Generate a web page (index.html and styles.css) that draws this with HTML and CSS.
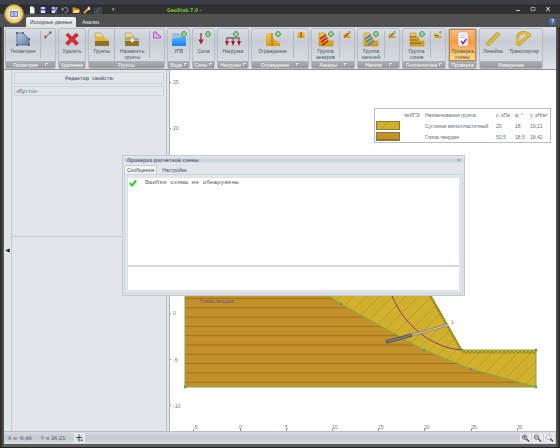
FILE: index.html
```html
<!DOCTYPE html>
<html lang="ru">
<head>
    <meta charset="UTF-8">
    <meta name="viewport" content="width=device-width, initial-scale=1.0">
    <title>GeoStab 7.0</title>
    <link rel="stylesheet" href="styles.css">
</head>
<body>
    <!-- shared icon shapes -->
    <svg class="defs" width="0" height="0">
        <defs>
            <linearGradient id="gold" x1="0" y1="0" x2="0" y2="1">
                <stop offset="0" stop-color="#f0c85a"/><stop offset="1" stop-color="#d69a0c"/>
            </linearGradient>
            <linearGradient id="steel" x1="0" y1="0" x2="1" y2="1">
                <stop offset="0" stop-color="#b9c9de"/><stop offset="1" stop-color="#5f7ea8"/>
            </linearGradient>
            <linearGradient id="water" x1="0" y1="0" x2="0" y2="1">
                <stop offset="0" stop-color="#7cc4fa"/><stop offset="1" stop-color="#1284ee"/>
            </linearGradient>
            <symbol id="plus" viewBox="0 0 6 6">
                <path d="M2 .5h2v1.500h1.500v2h-1.500v1.500h-2v-1.500h-1.500v-2h1.500z" fill="#a8dca0" stroke="#3f9348" stroke-width=".8"/>
            </symbol>
            <symbol id="steps" viewBox="0 0 16 16">
                <path d="M1 2h6v4h3v4h5v5h-14z" fill="url(#gold)" stroke="#b98a20" stroke-width=".6"/>
            </symbol>
            <symbol id="soil" viewBox="0 0 16 16">
                <path d="M1 2h6l3 4h-9z" fill="#e8d9a0" stroke="#a89858" stroke-width=".6"/>
                <path d="M1 6h9l5 4h-14z" fill="#e3b43a"/>
                <path d="M1 10h14v5h-14z" fill="#8b7430"/>
            </symbol>
        </defs>
    </svg>

    <div class="window">
        <header class="titlebar">
            <button class="app-button" aria-label="GeoStab">
                <svg viewBox="0 0 10 8"><rect x=".5" y=".5" width="9" height="7" fill="#7487b8" stroke="#e8edf7"/><path d="M2 3h2.500M2 5h2.500M5.500 3h2.500M5.500 5h2.500" stroke="#fff"/></svg>
            </button>
            <div class="quick">
                <button aria-label="Новый"><svg viewBox="0 0 8 8"><path d="M2 .5h3l1.500 1.500v5.500h-4.500z" fill="#f4f6fa"/><path d="M5 .5v1.500h1.500" fill="none" stroke="#8f98a8" stroke-width=".5"/></svg></button>
                <button aria-label="Сохранить"><svg viewBox="0 0 8 8"><path d="M1 1h6v6h-6z" fill="#4d48c4"/><path d="M2.500 1h3v2h-3zM2 4.500h4v2.500h-4z" fill="#eef"/></svg></button>
                <button aria-label="Сохранить как"><svg viewBox="0 0 8 8"><path d="M1 1h6v6h-6z" fill="#4d48c4"/><path d="M2.500 1h2v2h-2zM2 4.500h3v2.500h-3z" fill="#eef"/><path d="M4 5l3-4 .8.6-3 4z" fill="#eed070"/></svg></button>
                <button aria-label="Отменить"><svg viewBox="0 0 8 8"><path d="M1.500 3q4-3 5 0t-3 4" fill="none" stroke="#7188ad" stroke-width="1.200"/><path d="M.5 1.500v3h3z" fill="#7188ad"/></svg></button>
                <button aria-label="Открыть"><svg viewBox="0 0 8 8"><path d="M.5 1.500h3l.7 1h3v4.500h-6.700z" fill="#c78d21"/><path d="M2 4h6l-1.300 3h-6z" fill="#ffd875"/></svg></button>
                <button aria-label="Настройки"><svg viewBox="0 0 8 8"><path d="M1 7l3.500-3.500" stroke="#f5a42b" stroke-width="1.800"/><path d="M4 3.500l1-2.500 2-.5-.5 1.500 1 .7-1 1.500z" fill="#e5e9ee"/></svg></button>
                <button aria-label="Снимок"><svg viewBox="0 0 8 8" fill="none" stroke="#626873"><path d="M.7 2h6.600v5h-6.600z" stroke-width=".7"/><circle cx="4" cy="4.500" r="1.400" stroke-width=".8"/><path d="M1 7l6-6" stroke-width=".7"/></svg></button>
            </div>
            <button class="quick-more" aria-label="Ещё">▾</button>
            <h1>GeoStab 7.0 -</h1>
            <div class="window-buttons">
                <button aria-label="Свернуть"><svg viewBox="0 0 6 6"><path d="M1 4.500h4" stroke="#c5c8cc"/></svg></button>
                <button aria-label="Развернуть"><svg viewBox="0 0 6 6"><path d="M1 1.500h4v3h-4z" fill="none" stroke="#9b9fa4"/></svg></button>
                <button aria-label="Закрыть"><svg viewBox="0 0 6 6"><path d="M1.200 1l3.600 4M4.800 1l-3.600 4" stroke="#c5c8cc" stroke-width="1.100"/></svg></button>
            </div>
        </header>

        <nav class="tabs">
            <button class="tab active">Исходные данные</button>
            <button class="tab">Анализ</button>
            <button class="help" aria-label="Справка">?</button>
        </nav>

        <div class="ribbon">
            <section class="group geometry">
                <div class="tools">
                    <button class="tool"><svg viewBox="0 0 16 16"><path d="M2 2h6l6 6v6h-12z" fill="url(#steel)" stroke="#4c617f" stroke-width=".8"/><path d="M1 1h2v2h-2zM7 1h2v2h-2zM13 7h2v2h-2zM13 13h2v2h-2zM1 13h2v2h-2z" fill="#536987"/></svg>Геометрия</button>
                    <button class="tool small" aria-label="Отрезок"><svg viewBox="0 0 8 8"><path d="M1.500 6l5-4.500" stroke="#666"/><circle cx="1.500" cy="6" r="1.400" fill="#ce4f42"/><path d="M5.500.5h2v2h-2z" fill="#555"/></svg></button>
                </div>
                <h2>Геометрия <i></i></h2>
            </section>
            <section class="group removal">
                <div class="tools">
                    <button class="tool"><svg viewBox="0 0 16 16"><path d="M2 4l2-2 4 4 4-4 2.500 2.500-4 3.800 4 3.700-2.500 2.500-4-4-4 4-2.500-2.500 4-3.800z" fill="#d12f33" stroke="#a9252b" stroke-width=".5"/></svg>Удалить</button>
                </div>
                <h2>Удаление</h2>
            </section>
            <section class="group soils">
                <div class="tools">
                    <button class="tool"><svg viewBox="0 0 16 16"><use href="#soil"/></svg>Грунты</button>
                    <button class="tool ruled"><svg viewBox="0 0 16 16"><use href="#soil"/><path d="M1 8h14" stroke="#79a8ce" stroke-width="1.500"/><path d="M6 9l2.500-2 2 2.500-2.500 2z" fill="#fff4d2"/></svg>Назначить<br>грунты</button>
                    <button class="tool small" aria-label="Слой"><svg viewBox="0 0 8 8"><path d="M.5 1h3v2h2v2h2v2h-7z" fill="#e2b0e5" stroke="#b84dc0" stroke-width=".9"/></svg></button>
                </div>
                <h2>Грунты</h2>
            </section>
            <section class="group water">
                <div class="tools">
                    <button class="tool"><svg viewBox="0 0 16 16"><path d="M1 2h7l3 4h4v9h-14z" fill="url(#water)"/><path d="M1 2h7l3 4-10 2z" fill="#9fc0d8"/><use href="#plus" x="10" y="0" width="6" height="6"/></svg>УГВ</button>
                </div>
                <h2>Вода <i></i></h2>
            </section>
            <section class="group forces">
                <div class="tools">
                    <button class="tool"><svg viewBox="0 0 16 16"><path d="M5 2v9" stroke="#93565e" stroke-width="1.600"/><path d="M2.500 8.500h5l-2.500 5z" fill="#a71d2d"/><use href="#plus" x="9" y="0" width="6" height="6"/></svg>Сила</button>
                </div>
                <h2>Силы <i></i></h2>
            </section>
            <section class="group loads">
                <div class="tools">
                    <button class="tool"><svg viewBox="0 0 16 16"><path d="M2 13v-6h12v6M8 7v6" fill="none" stroke="#8b6066" stroke-width="1.400"/><path d="M0 10h4l-2 5zM6 10h4l-2 5zM12 10h4l-2 5z" fill="#a71d2d"/><use href="#plus" x="8" y="0" width="6" height="6"/></svg>Нагрузка</button>
                </div>
                <h2>Нагрузки <i></i></h2>
            </section>
            <section class="group fencing">
                <div class="tools">
                    <button class="tool"><svg viewBox="0 0 16 16"><path d="M1 2h6v13h-6zM7 5l3 4 5 3v3h-8z" fill="url(#gold)"/><path d="M7 2v13" stroke="#8d6b20"/><use href="#plus" x="10" y="0" width="6" height="6"/></svg>Ограждение</button>
                    <button class="tool small" aria-label="Ограждение в точке"><svg viewBox="0 0 8 8"><path d="M.5 1h7v6h-7z" fill="url(#gold)"/><path d="M4 1v5" stroke="#a82630" stroke-width="1.200"/></svg></button>
                </div>
                <h2>Ограждение <i></i></h2>
            </section>
            <section class="group anchors">
                <div class="tools">
                    <button class="tool"><svg viewBox="0 0 16 16"><use href="#steps"/><path d="M2 8l6-4M3 11l6-4M4 14l6-4" stroke="#c32227" stroke-width="1.700"/><use href="#plus" x="10" y="0" width="6" height="6"/></svg>Группа<br>анкеров</button>
                    <button class="tool small" aria-label="Анкер"><svg viewBox="0 0 8 8"><path d="M.5 2h3l4 3v2h-7z" fill="url(#gold)"/><path d="M1.500 6l4-4" stroke="#b82b2d" stroke-width="1.300"/><use href="#plus" x="5" y="0" width="3" height="3"/></svg></button>
                </div>
                <h2>Анкеры <i></i></h2>
            </section>
            <section class="group nails">
                <div class="tools">
                    <button class="tool"><svg viewBox="0 0 16 16"><use href="#steps"/><path d="M2 8l6-4M3 11l6-4M5 14l6-4" stroke="#3c87cc" stroke-width="1.700"/><use href="#plus" x="10" y="0" width="6" height="6"/></svg>Группа<br>нагелей</button>
                    <button class="tool small" aria-label="Нагель"><svg viewBox="0 0 8 8"><path d="M.5 2h3l4 3v2h-7z" fill="url(#gold)"/><path d="M1.500 6l4-4" stroke="#50779b" stroke-width="1.300"/><use href="#plus" x="5" y="0" width="3" height="3"/></svg></button>
                </div>
                <h2>Нагели <i></i></h2>
            </section>
            <section class="group geosynthetic">
                <div class="tools">
                    <button class="tool"><svg viewBox="0 0 16 16"><use href="#steps"/><path d="M1 6h6M1 9h8M1 12h11" stroke="#745b18" stroke-width="1.200"/><use href="#plus" x="10" y="0" width="6" height="6"/></svg>Группа<br>слоев</button>
                    <button class="tool small" aria-label="Слой геосинтетики"><svg viewBox="0 0 8 8"><path d="M.5 1.500h2.500v2h2v1.500h2.500v2h-7z" fill="url(#gold)"/><path d="M.5 4.500h4" stroke="#80631d"/><use href="#plus" x="5" y="0" width="3" height="3"/></svg></button>
                </div>
                <h2>Геосинтетика <i></i></h2>
            </section>
            <section class="group check">
                <div class="tools">
                    <button class="tool pressed"><svg viewBox="0 0 16 16"><rect x="3" y="1" width="10" height="14" rx="1.500" fill="#fdfbff" stroke="#b5a3bb" stroke-width=".7"/><path d="M5 4h6M5 6.500h6" stroke="#c6bccf"/><path d="M6 10l2 2.500 3.500-4.500" fill="none" stroke="#873da8" stroke-width="1.800"/></svg>Проверка<br>схемы</button>
                </div>
                <h2>Проверка</h2>
            </section>
            <section class="group measure">
                <div class="tools">
                    <button class="tool"><svg viewBox="0 0 16 16"><path d="M1 12.500l11.500-11.500 2.500 2.500-11.500 11.500z" fill="#e0bd32" stroke="#a98b16" stroke-width=".7"/><path d="M4 10l1 1M6 8l1 1M8 6l1 1M10 4l1 1" stroke="#8c7518" stroke-width=".6"/></svg>Линейка</button>
                    <button class="tool"><svg viewBox="0 0 16 16"><path d="M2.500 13.500a6.500 6.500 0 0 1 11-9.500z" fill="none" stroke="#b39417" stroke-width="3" stroke-linejoin="round"/><path d="M2.500 13.500a6.500 6.500 0 0 1 11-9.500z" fill="none" stroke="#e3c238" stroke-width="1.800" stroke-linejoin="round"/></svg>Транспортир</button>
                </div>
                <h2>Измерение</h2>
            </section>
        </div>

        <main class="workspace">
            <button class="collapse" aria-label="Свернуть панель"><svg viewBox="0 0 6 6"><path d="M.5 3l5-2.500v5z"/></svg></button>
            <aside class="properties">
                <div class="property-list">
                    <h3>Редактор свойств</h3>
                    <p>&lt;Пусто&gt;</p>
                </div>
                <div class="property-help"></div>
            </aside>
            <div class="canvas">
                <svg class="plot" viewBox="170 70 386 361" preserveAspectRatio="xMinYMin meet">
                    <defs>
                        <pattern id="clay" x="0" y="298" width="20" height="9.300" patternUnits="userSpaceOnUse">
                            <rect width="20" height="10" fill="#c4902c"/><path d="M0 .5h20" stroke="#a1721b"/>
                        </pattern>
                        <pattern id="loam" width="13" height="13" patternUnits="userSpaceOnUse">
                            <rect width="13" height="13" fill="#d0b02d"/><path d="M-1 14l15-15" stroke="#b3951f" stroke-width=".7"/>
                        </pattern>
                        <pattern id="ground" width="4" height="3" patternUnits="userSpaceOnUse">
                            <path d="M0 0l2 2.500 2-2.500" fill="none" stroke="#6d681e" stroke-width=".7"/>
                        </pattern>
                    </defs>
                    <path class="tick" d="M169 82.500h2M169 128.500h2M169 174.500h2M169 220.500h2M169 267.500h2M169 313.500h2M169 359.500h2M169 405.500h2"/>
                    <path class="tick" d="M193.500 429v2M240.500 429v2M286.500 429v2M332.500 429v2M378.500 429v2M424.500 429v2M471.500 429v2M517.500 429v2"/>
                    <g class="axis">
                        <text x="173" y="84">25</text>
                        <text x="173" y="130">20</text>
                        <text x="173" y="315">0</text>
                        <text x="173" y="362">-5</text>
                        <text x="173" y="408">-10</text>
                        <text x="193" y="429">-5</text>
                        <text x="239" y="429">0</text>
                        <text x="285" y="429">5</text>
                        <text x="332" y="429">10</text>
                        <text x="378" y="429">15</text>
                        <text x="424" y="429">20</text>
                        <text x="471" y="429">25</text>
                        <text x="517" y="429">30</text>
                    </g>
                    <path d="M185 290h135l21 14 83 46 47 19 65 18h-351z" fill="url(#clay)"/>
                    <path d="M320 290h108l34 60h74v37l-65-18-47-19-83-46z" fill="url(#loam)"/>
                    <path d="M462 351h74v3h-74z" fill="url(#ground)"/>
                    <path d="M429 294l33 57" stroke="#6d681e" stroke-width="2" stroke-dasharray="1 1"/>
                    <path d="M185 290v97h351v-37h-74l-34-60M320 290l21 14 83 46 47 19 65 18" fill="none" stroke="#7fa83a"/>
                    <path d="M390 290C400 322 430 348 462 350" fill="none" stroke="#8c3577"/>
                    <path d="M412 335l36-10" stroke="#7f7a63" stroke-width="2.500"/>
                    <path d="M412 335l36-10" stroke="#d8d4c0" stroke-width="1.200"/>
                    <path d="M386 342l26-7" stroke="#565963" stroke-width="3.500"/>
                    <path d="M387 341.700l24-6.500" stroke="#7f7f80" stroke-width="1.500"/>
                    <path d="M184 386h2v2h-2zM340 303h2v2h-2zM423 349h2v2h-2zM470 368h2v2h-2zM461 349h2v2h-2zM535 349h2v2h-2zM535 386h2v2h-2z" fill="#6ba078" stroke="#4d9a62" stroke-width=".5"/>
                    <text class="soil-name" x="200" y="303">Глина твердая</text>
                    <text class="nail-name" x="451" y="324">1</text>
                </svg>
                <table class="legend">
                    <tr><th></th><th>№ИГЭ</th><th>Наименование грунта</th><th>c, кПа</th><th>φ, °</th><th>γ, кН/м³</th></tr>
                    <tr><td><span class="swatch loam"></span></td><td></td><td>Суглинок мягкопластичный</td><td>20</td><td>18</td><td>19,21</td></tr>
                    <tr><td><span class="swatch clay"></span></td><td></td><td>Глина твердая</td><td>50,5</td><td>18,5</td><td>18,42</td></tr>
                </table>
            </div>
        </main>

        <footer class="status">
            <span>X = -6,49</span>
            <span>Y = 26,21</span>
            <button aria-label="Привязка"><svg viewBox="0 0 10 10"><path d="M4.500 1v8M1 4.500h7" stroke="#333"/><path d="M6 7.500h3M7.500 6v3M2 7h1M7 2h1" stroke="#555" stroke-width=".8"/></svg></button>
            <div class="zoom">
                <button aria-label="Увеличить"><svg viewBox="0 0 10 10"><circle cx="4" cy="4" r="2.500" fill="#e9edf4" stroke="#667"/><path d="M2.500 4h3M4 2.500v3" stroke="#333" stroke-width=".8"/><path d="M6 6l3 3" stroke="#514449" stroke-width="1.500"/></svg></button>
                <button aria-label="Уменьшить"><svg viewBox="0 0 10 10"><circle cx="4" cy="4" r="2.500" fill="#e9edf4" stroke="#667"/><path d="M2.500 4h3" stroke="#333" stroke-width=".8"/><path d="M6 6l3 3" stroke="#514449" stroke-width="1.500"/></svg></button>
                <button aria-label="Показать всё"><svg viewBox="0 0 10 10"><circle cx="4" cy="4" r="2.500" fill="#f1f3f7" stroke="#889" stroke-dasharray="2 .8"/><path d="M6 6l3 3" stroke="#514449" stroke-width="1.500"/></svg></button>
            </div>
        </footer>
    </div>

    <div class="dialog" role="dialog" aria-labelledby="dialog-title">
        <div class="dialog-title">
            <h2 id="dialog-title">Проверка расчетной схемы</h2>
            <button aria-label="Закрыть">×</button>
        </div>
        <div class="dialog-tabs">
            <button class="active">Сообщения</button>
            <button>Настройки</button>
        </div>
        <div class="dialog-body">
            <div class="messages">
                <p><svg viewBox="0 0 8 8"><path d="M.8 4l2.200 2.500 4.200-5" fill="none" stroke="#35c52f" stroke-width="2"/></svg>Ошибки схемы не обнаружены</p>
            </div>
            <div class="details"></div>
        </div>
    </div>
</body>
</html>
```
FILE: styles.css
```css
* {
    box-sizing: border-box;
}
body {
    margin: 0;
    height: 100vh;
    overflow: hidden;
    font-family: "Liberation Sans", Arial, sans-serif;
    font-size: 5px;
    line-height: 6px;
    color: #4c5361;
}
h1, h2, h3, p {
    margin: 0;
    font-size: inherit;
    font-weight: normal;
}
button {
    margin: 0;
    padding: 0;
    border: none;
    background: none;
    font: inherit;
    color: inherit;
}
svg {
    display: block;
}
.defs {
    position: absolute;
}
.window {
    height: 100%;
    display: flex;
    flex-direction: column;
    padding: 0 4px 3px;
    background: linear-gradient(to right, #242424 0, #5c5c5c 4px, #5c5c5c calc(100% - 4px), #242424 100%);
    border-bottom: 1px solid #222;
}

/* title bar */
.titlebar {
    flex: none;
    height: 14px;
    margin: 0 -4px;
    display: flex;
    align-items: flex-start;
    padding: 6px 9px 0 4px;
    background: linear-gradient(#3b3f4b 0, #3b3f4b 4px, #2c2d2f 5px, #333 100%);
}
.app-button {
    position: relative;
    z-index: 1;
    flex: none;
    width: 20px;
    height: 20px;
    margin-top: -2px;
    display: flex;
    align-items: center;
    justify-content: center;
    border: 1px solid #9b8030;
    border-radius: 50%;
    background: radial-gradient(#fff8d8 0, #f3d887 50%, #d9a42a 100%);
}
.app-button svg {
    width: 10px;
    height: 8px;
}
.quick {
    display: flex;
    gap: 3px;
    margin-left: 4px;
}
.quick svg {
    width: 8px;
    height: 8px;
}
.quick-more {
    margin-left: 10px;
    color: #bbb;
}
h1 {
    margin-left: 52px;
    font-family: "DejaVu Sans Condensed", "DejaVu Sans", sans-serif;
    font-weight: bold;
    line-height: 8px;
    color: #7cc52e;
}
.window-buttons {
    display: flex;
    gap: 9px;
    margin-left: auto;
}
.window-buttons svg {
    width: 6px;
    height: 6px;
}

/* ribbon tabs */
.tabs {
    flex: none;
    height: 13px;
    margin: 0 -4px;
    padding: 3px 4px 0 26px;
    display: flex;
    align-items: stretch;
    background: #515151;
}
.tab {
    padding: 0 4px;
    color: #eee;
}
.tab.active {
    background: linear-gradient(#f0f2f4, #dde1e6);
    border-radius: 2px 2px 0 0;
    color: #444;
}
.tab + .tab {
    margin-left: 2px;
}
.help {
    width: 7px;
    height: 7px;
    margin: 1px 0 0 auto;
    border-radius: 50%;
    background: #476ba6;
    color: #fff;
    font-weight: bold;
    line-height: 7px;
}

/* ribbon */
.ribbon {
    flex: none;
    display: flex;
    gap: 2px;
    padding: 1px 1px 0;
    background: linear-gradient(#e0e3e8, #c3c8d0 30%, #dfe3e8);
    border-bottom: 1px solid #8b8e91;
}
.group {
    display: flex;
    flex-direction: column;
    flex: none;
    border: 1px solid #b8bdc5;
    border-radius: 2px;
    background: linear-gradient(#dadee4 0, #c8ccd4 30%, #dde2e7 100%);
    overflow: hidden;
}
.geometry { width: 51px; }
.removal { width: 28px; }
.soils { width: 77px; }
.water { width: 23px; }
.forces { width: 23px; }
.loads { width: 32px; }
.fencing { width: 58px; }
.anchors { width: 44px; }
.nails { width: 43px; }
.geosynthetic { width: 44px; }
.check { width: 29px; }
.measure { width: 64px; }

.tools {
    height: 32px;
    display: flex;
}
.tool {
    flex: 1 1 auto;
    display: flex;
    flex-direction: column;
    align-items: center;
    padding-top: 2px;
    white-space: nowrap;
    text-align: center;
}
.tool svg {
    width: 16px;
    height: 16px;
    margin-bottom: 1px;
}
.tool.small {
    flex: 0 0 15px;
    margin: 2px 0 3px;
    padding-top: 0;
    border-left: 1px solid #b3b8c0;
}
.tool.small svg {
    width: 8px;
    height: 8px;
}
.tool.ruled {
    border-left: 1px solid #b3b8c0;
}
.tool.pressed {
    border: 1px solid #b98443;
    padding-top: 1px;
    background: linear-gradient(#f5bf86 0, #fb9a3c 40%, #ffe08a 100%);
}
.group h2 {
    display: flex;
    justify-content: center;
    align-items: center;
    height: 7px;
    background: linear-gradient(#aeb2b7, #94989d);
    color: #fff;
    white-space: nowrap;
}
.group h2 i {
    width: 3px;
    height: 3px;
    margin-left: 2px;
    border: 1px solid #dcdfe2;
    border-width: 1px 0 0 1px;
}
.geometry h2 i,
.fencing h2 i,
.anchors h2 i,
.nails h2 i {
    margin-left: 7px;
}

/* workspace */
.workspace {
    flex: 1;
    min-height: 0;
    display: flex;
    background: #e2e6ea;
}
.collapse {
    width: 8px;
    border-right: 1px solid #c3cad1;
    display: flex;
    align-items: center;
    justify-content: center;
}
.collapse svg {
    width: 5px;
    height: 5px;
}
.properties {
    width: 155px;
    display: flex;
    flex-direction: column;
    border-right: 1px solid #b9c1c9;
}
.property-list {
    flex: 5;
    padding: 2px;
    border-bottom: 1px solid #c0c8cf;
}
.property-list h3,
.property-list p {
    border: 1px solid #ccd3d9;
    font-family: "DejaVu Sans Mono", monospace;
}
.property-list h3 {
    font-weight: bold;
    line-height: 10px;
    text-align: center;
    color: #5f6c80;
}
.property-list p {
    margin-top: 2px;
    padding: 0 1px;
    line-height: 8px;
}
.property-help {
    flex: 6;
}
.canvas {
    position: relative;
    flex: 1;
    margin-left: 2px;
    border-left: 1px solid #a9afb5;
    background: #fff;
}
.plot {
    width: 100%;
    height: 100%;
}
.plot text {
    font-size: 5px;
    fill: #66768e;
}
.tick {
    stroke: #8b929a;
    fill: none;
}
.plot .soil-name {
    fill: #6d5a80;
}
.legend {
    position: absolute;
    top: 38px;
    right: 5px;
    width: 177px;
    border: 1px solid #b9bcc2;
    border-spacing: 0;
    table-layout: fixed;
    background: #fff;
    color: #606b85;
}
.legend th,
.legend td {
    height: 11px;
    padding: 0;
    font-weight: normal;
    text-align: left;
    white-space: nowrap;
}
.legend th:nth-child(1) { width: 29px; }
.legend th:nth-child(2) { width: 21px; }
.legend th:nth-child(3) { width: 71px; }
.legend th:nth-child(4) { width: 19px; }
.legend th:nth-child(5) { width: 15px; }
.swatch {
    display: block;
    width: 24px;
    height: 9px;
    margin-left: 1px;
    border: 1px solid #8d7a3a;
}
.swatch.loam {
    background: repeating-linear-gradient(135deg, #d0b02d 0, #d0b02d 7px, #b3951f 8px);
}
.swatch.clay {
    background: linear-gradient(#c4902c 6px, #a1721b 6px);
}

/* status bar */
.status {
    flex: none;
    height: 13px;
    display: flex;
    align-items: center;
    gap: 9px;
    padding: 0 1px 0 4px;
    border-top: 1px solid #b8bcc1;
    background: linear-gradient(#d8dbe0, #c4c8cf 50%, #dcdfe3);
    font-family: "DejaVu Sans", sans-serif;
    white-space: nowrap;
}
.status button {
    padding: 0 1px;
    background: #e6e8eb;
}
.status svg {
    width: 9px;
    height: 10px;
}
.zoom {
    display: flex;
    gap: 1px;
    margin-left: auto;
}

/* check results dialog */
.dialog {
    position: absolute;
    left: 122px;
    top: 155px;
    width: 343px;
    padding: 1px;
    border: 1px solid #c2c9d0;
    background: #e2e6ea;
}
.dialog-title {
    display: flex;
    justify-content: space-between;
    padding: 0 3px;
    background: linear-gradient(#e2e6ea, #c8d0d8 50%, #dde2e7);
    color: #67758c;
}
.dialog-title h2 {
    font-family: "DejaVu Sans Condensed", "DejaVu Sans", sans-serif;
    font-weight: bold;
}
.dialog-tabs {
    display: flex;
    gap: 2px;
    margin-top: 2px;
}
.dialog-tabs button {
    height: 9px;
    padding: 0 3px;
}
.dialog-tabs .active {
    border: 1px solid #c5ccd3;
    border-bottom: none;
    border-radius: 2px 2px 0 0;
    background: #f1f3f5;
    padding: 0 2px;
}
.dialog-body {
    padding: 2px;
    border: 1px solid #ccd3d9;
}
.messages,
.details {
    border: 1px solid #dfe3e7;
    background: #fff;
}
.messages {
    height: 88px;
    border-bottom: none;
}
.messages p {
    display: flex;
    align-items: center;
    gap: 8px;
    padding: 1px;
    font-family: "Liberation Mono", monospace;
    font-size: 6px;
    line-height: 8px;
    color: #555;
}
.messages svg {
    width: 8px;
    height: 8px;
}
.details {
    height: 26px;
    border-top: 2px solid #d3d9df;
}
```
